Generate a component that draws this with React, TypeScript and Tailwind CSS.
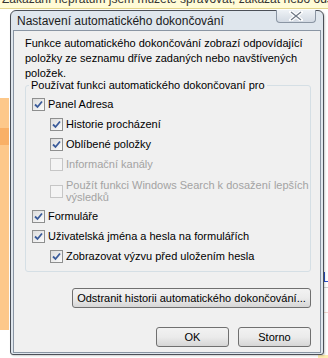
import React from 'react';

type Item = {
  label: string;
  checked: boolean;
  disabled?: boolean;
  indent?: boolean;
};

const FONT = { fontFamily: '"Liberation Sans", Arial, sans-serif' };

const CheckBox = ({ checked, disabled }: { checked: boolean; disabled?: boolean }) => (
  <span
    className={
      'flex h-[13px] w-[13px] shrink-0 items-center justify-center border ' +
      (disabled ? 'border-[#c6c6c6] bg-[#f4f4f4]' : 'border-[#8e8f8f] bg-gradient-to-br from-[#dcdcdc] to-[#fbfbfb]')
    }
  >
    {checked && (
      <svg width="9" height="9" viewBox="0 0 9 9">
        <path d="M1 4.5 L3.5 7 L8 1.5" fill="none" stroke="#3a5b9a" strokeWidth="1.8" />
      </svg>
    )}
  </span>
);

const Row = ({ label, checked, disabled, indent }: Item) => (
  <div className={'flex h-[15px] items-center gap-[3px] ' + (indent ? 'pl-[18px]' : '')}>
    <CheckBox checked={checked} disabled={disabled} />
    <span className={'whitespace-nowrap leading-[15px] ' + (disabled ? 'text-[#a3a3a3]' : 'text-black')}>{label}</span>
  </div>
);

const Button = ({ children, className }: { children: React.ReactNode; className?: string }) => (
  <button
    className={
      'h-[20px] whitespace-nowrap rounded-[3px] border border-[#707070] bg-gradient-to-b from-[#f2f2f2] via-[#ebebeb] to-[#d6d6d6] text-[11px] text-black ' +
      (className || '')
    }
  >
    {children}
  </button>
);

export default function App() {
  return (
    <div className="relative h-[358px] w-[328px] overflow-hidden bg-white" style={FONT}>
      {/* page behind the dialog */}
      <div className="absolute left-0 right-0 top-0 h-[9px] overflow-hidden border-b border-[#e3d58a] bg-[#fffbd6]">
        <div className="mt-[-8px] whitespace-nowrap pl-[2px] text-[12px] leading-[14px] text-[#333]">
          Zakázání nepřátům jsem můžete spravovat, zakázat nebo odstranit
        </div>
      </div>
      <div className="absolute left-0 top-[98px] h-[232px] w-[9px] bg-[#fdc88a]" />
      <div className="absolute left-0 top-[128px] h-[17px] w-[9px] bg-[#f9b066]" />
      <div className="absolute right-0 top-[272px] h-[10px] w-[4px] border-b border-l border-[#2b50c8]" />
      <div className="absolute right-0 top-[287px] h-[1px] w-[4px] bg-[#d0d0d0]" />
      <div className="absolute right-0 top-[312px] h-[1px] w-[4px] bg-[#f3d8d0]" />
      <div className="absolute bottom-0 right-0 h-[3px] w-[10px] bg-[#fdebb0]" />

      {/* dialog window */}
      <div className="absolute left-[10px] top-[10px] w-[314px] rounded-t-[6px] rounded-b-[3px] border border-[#4b4f57] bg-[#dfe6ed] pb-[1px] shadow-[1px_1px_2px_rgba(0,0,0,0.2)]">
        <div className="relative flex h-[19px] items-center pl-[6px] text-[12px] text-[#1b1b1b]">
          Nastavení automatického dokončování
          <div className="absolute right-[7px] top-[-1px] flex h-[13px] w-[40px] items-center justify-center rounded-b-[4px] border border-t-0 border-[#8a95a3] bg-gradient-to-b from-[#eef2f6] to-[#d3dae3]">
            <svg width="14" height="10" viewBox="0 0 14 10">
              <path d="M2 1 L12 9 M12 1 L2 9" stroke="#ffffff" strokeWidth="3.6" strokeLinecap="square" />
              <path d="M2 1 L12 9 M12 1 L2 9" stroke="#6d7784" strokeWidth="1.2" fill="none" />
            </svg>
          </div>
        </div>

        <div className="mx-[2px] border border-[#8a95a3] bg-[#f0f0f0] pb-[5px] pl-[11px] pr-[9px] pt-[5px] text-[11px]">
          <p className="leading-[15px] text-black">
            Funkce automatického dokončování zobrazí odpovídající položky ze seznamu dříve zadaných nebo navštívených
            položek.
          </p>

          {/* group box */}
          <div className="relative mt-[4px] flex flex-col gap-[5px] rounded-[3px] border border-[#d5dfe5] px-[6px] pb-[7px] pt-[11px]">
            <span className="absolute left-[3px] top-[-8px] bg-[#f0f0f0] px-[2px] leading-[14px] text-black">
              Používat funkci automatického dokončovaní pro
            </span>
            <Row label="Panel Adresa" checked />
            <Row label="Historie procházení" checked indent />
            <Row label="Oblíbené položky" checked indent />
            <Row label="Informační kanály" checked={false} disabled indent />
            <div className="mb-[1px] mt-[2px] flex items-center gap-[3px] pl-[18px]">
              <CheckBox checked={false} disabled />
              <span className="whitespace-nowrap leading-[12px] text-[#a3a3a3]">
                Použít funkci Windows Search k dosažení lepších
                <br />
                výsledků
              </span>
            </div>
            <Row label="Formuláře" checked />
            <Row label="Uživatelská jména a hesla na formulářích" checked />
            <Row label="Zobrazovat výzvu před uložením hesla" checked indent />
          </div>

          <div className="mt-[16px] flex justify-end">
            <Button className="w-[239px]">Odstranit historii automatického dokončování...</Button>
          </div>
          <div className="mt-[19px] flex justify-end gap-[9px]">
            <Button className="w-[73px]">OK</Button>
            <Button className="w-[73px]">Storno</Button>
          </div>
        </div>
      </div>
    </div>
  );
}
